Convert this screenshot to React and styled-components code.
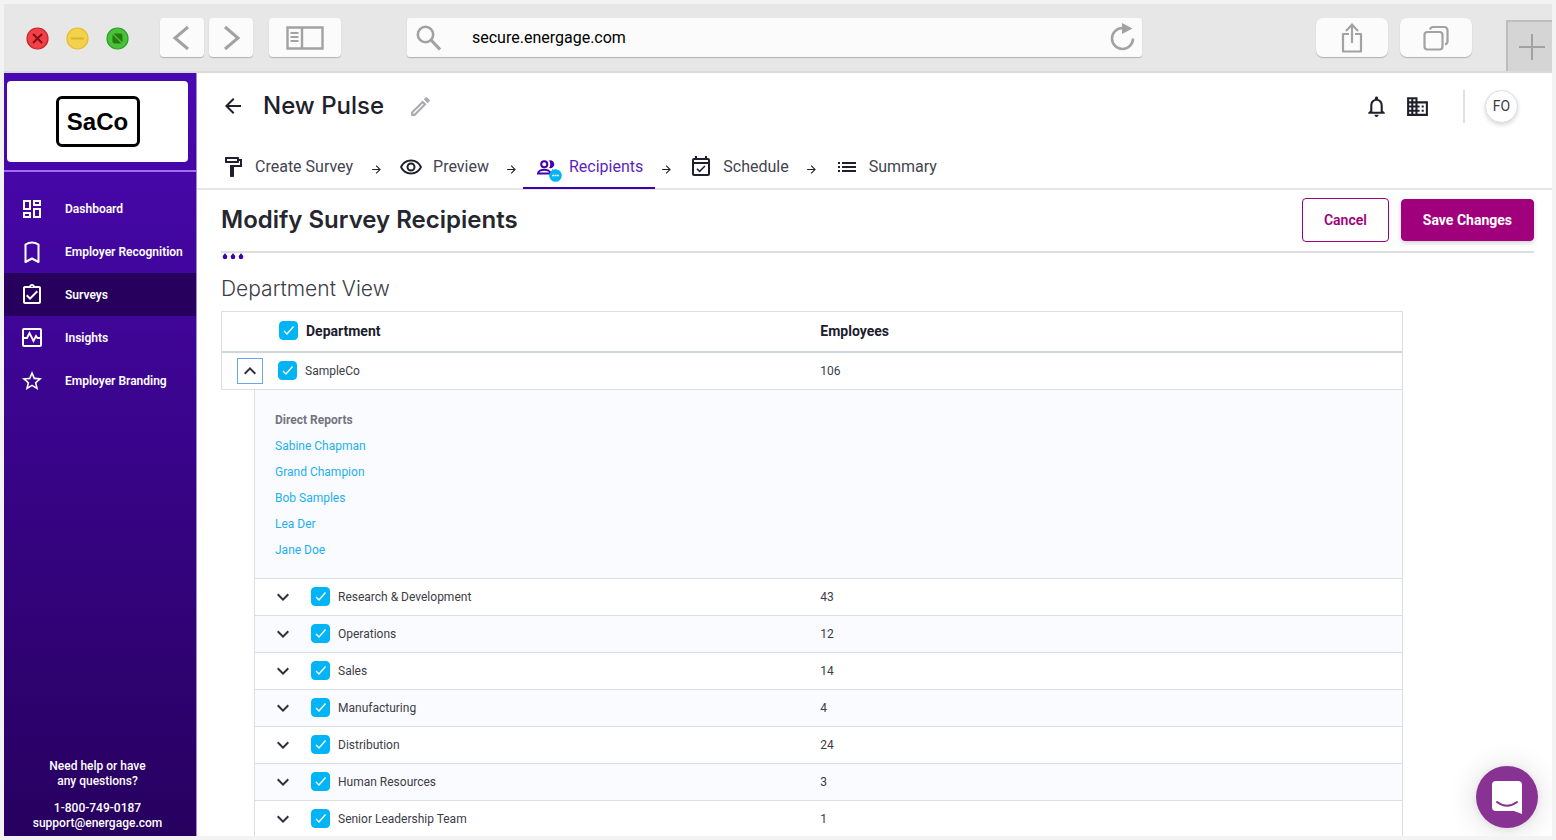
import { Fragment, useState } from "react";
import styled, { createGlobalStyle } from "styled-components";
import {
  MdArrowBack,
  MdArrowForward,
  MdBusiness,
  MdExpandLess,
  MdExpandMore,
  MdList,
  MdNotificationsNone,
  MdOutlineAssignmentTurnedIn,
  MdOutlineDashboard,
  MdOutlineEdit,
  MdOutlineEventAvailable,
  MdOutlineFormatPaint,
  MdOutlineRemoveRedEye,
  MdStarBorder,
} from "react-icons/md";

const GlobalStyle = createGlobalStyle`
  * {
    box-sizing: border-box;
  }

  body {
    margin: 0;
    background: #f3f3f3;
    color: #3c3c46;
    font-family: Roboto, "Liberation Sans", sans-serif;
    font-size: 12px;
  }

  button, input {
    font-family: inherit;
  }

  svg {
    display: block;
    flex: none;
  }
`;

const Window = styled.div`
  position: relative;
  display: flex;
  flex-direction: column;
  height: calc(100vh - 8px);
  margin: 4px;
  overflow: hidden;
  background: #fff;
`;

/* browser bar */

const BrowserBar = styled.div`
  display: flex;
  flex: none;
  align-items: flex-start;
  height: 69px;
  padding: 14px 0 0 22px;
  background: #e7e7e7;
  border-bottom: 2px solid #dadada;
`;

const TrafficLights = styled.div`
  display: flex;
  gap: 17px;
  height: 40px;
  align-items: center;
  margin-right: 31px;
`;

const BrowserButton = styled.button`
  display: flex;
  align-items: center;
  justify-content: center;
  width: ${({ $wide }) => ($wide ? "72px" : "44px")};
  height: 39px;
  padding: 0;
  border: 0;
  border-radius: ${({ $round }) => ($round ? "7px" : "4px")};
  background: #fbfbfb;
  box-shadow: 0 1px 1px #b0b0b0;
`;

const ButtonGroup = styled.div`
  display: flex;
  gap: ${({ $gap }) => $gap}px;
  margin-right: ${({ $after }) => $after}px;
`;

const AddressBar = styled.label`
  display: flex;
  flex: 1;
  align-items: center;
  height: 39px;
  margin: 0 174px 0 66px;
  padding: 0 7px 0 9px;
  border-radius: 3px;
  background: #fbfbfb;
  box-shadow: 0 1px 1px #b0b0b0;
`;

const AddressInput = styled.input`
  flex: 1;
  min-width: 0;
  margin-left: 30px;
  padding: 0;
  border: 0;
  outline: 0;
  background: none;
  color: #000;
  font-size: 16px;
`;

const NewTabButton = styled.button`
  display: flex;
  align-items: center;
  justify-content: center;
  width: 46px;
  height: 51px;
  margin-top: 2px;
  padding: 0 0 0 4px;
  border: solid #bdbdbd;
  border-width: 2px 0 0 2px;
  background: #d5d5d5;
`;

/* sidebar */

const Body = styled.div`
  display: flex;
  flex: 1;
  min-height: 0;
`;

const Sidebar = styled.aside`
  display: flex;
  flex: none;
  flex-direction: column;
  width: 193px;
  border-right: 1px solid #a48bd6;
  background: linear-gradient(#4a08b2, #27005f);
  color: #fff;
`;

const LogoArea = styled.div`
  padding: 8px 8px 8px 3px;
  border-bottom: 2px solid #a46cf2;
`;

const LogoCard = styled.div`
  display: flex;
  align-items: center;
  justify-content: center;
  height: 81px;
  border-radius: 4px;
  background: #fff;
`;

const Logo = styled.div`
  width: 84px;
  border: 3px solid #000;
  border-radius: 6px;
  color: #000;
  font: bold 24px/45px "Liberation Sans", sans-serif;
  text-align: center;
`;

const SideNav = styled.nav`
  flex: 1;
  padding-top: 15px;
`;

const SideLink = styled.a`
  display: flex;
  align-items: center;
  gap: 21px;
  height: 43px;
  padding-left: 16px;
  background: ${({ $active }) => ($active ? "#26005c" : "none")};
  color: #fff;
  font-size: 12px;
  font-weight: 600;
  text-decoration: none;
  white-space: nowrap;
`;

const Help = styled.div`
  padding-bottom: 5px;
  font-size: 12px;
  font-weight: 500;
  line-height: 15px;
  text-align: center;

  p {
    margin: 12px 5px 0 0;
  }
`;

/* page header */

const Main = styled.main`
  flex: 1;
  min-width: 0;
  overflow-y: auto;
  scrollbar-width: none;
`;

const Header = styled.header`
  display: flex;
  align-items: center;
  height: 66px;
  padding: 0 34px 0 24px;
  color: #20202c;
`;

const IconButton = styled.button`
  display: flex;
  padding: 0;
  border: 0;
  background: none;
  color: ${({ $muted }) => ($muted ? "#a9a9b3" : "inherit")};
`;

const PageName = styled.h1`
  margin: 0 24px 0 18px;
  font: 500 24px/32px Inter, sans-serif;
`;

const HeaderTools = styled.div`
  display: flex;
  align-items: center;
  gap: 16px;
  margin-left: auto;
`;

const Divider = styled.span`
  width: 2px;
  height: 33px;
  margin: 0 4px 0 17px;
  background: #dfe0e4;
`;

const Avatar = styled.button`
  width: 33px;
  height: 33px;
  padding: 0;
  border: 1px solid #dcdce6;
  border-radius: 50%;
  background: #fff;
  box-shadow: 0 2px 4px #d8d8d8;
  color: #3c3c46;
  font-size: 14px;
`;

const Steps = styled.nav`
  display: flex;
  height: 51px;
  padding-left: 12px;
  border-bottom: 2px solid #e6e6e6;
`;

const Step = styled.a`
  display: flex;
  align-items: center;
  gap: 10px;
  height: 50px;
  padding: 6px 12px 0;
  border-bottom: 2px solid ${({ $active }) => ($active ? "#4200ad" : "transparent")};
  color: ${({ $active }) => ($active ? "#5b1fc0" : "#44444f")};
  font-size: 16px;
  text-decoration: none;
  white-space: nowrap;

  svg {
    color: ${({ $active }) => ($active ? "#4200ad" : "#20202c")};
  }
`;

const StepArrow = styled.span`
  display: flex;
  align-items: center;
  justify-content: center;
  width: 22px;
  padding-top: 11px;
  color: #20202c;
`;

const StepIcon = styled.span`
  position: relative;
  padding-top: 1px;
`;

const StepBadge = styled.span`
  position: absolute;
  right: -3px;
  bottom: -4px;
`;

/* content */

const Content = styled.section`
  padding: 0 18px 0 24px;
`;

const TitleRow = styled.div`
  display: flex;
  align-items: center;
  gap: 12px;
  height: 63px;
  padding-bottom: 2px;
  border-bottom: 2px solid #dedede;
`;

const Title = styled.h2`
  flex: 1;
  margin: 0;
  color: #26262f;
  font: 600 24px/32px Inter, sans-serif;
`;

const ActionButton = styled.button`
  height: ${({ $primary }) => ($primary ? "42px" : "44px")};
  padding: 0 21px;
  border: 1px solid #a0007c;
  border-radius: 4px;
  background: ${({ $primary }) => ($primary ? "#a0007c" : "#fff")};
  box-shadow: ${({ $primary }) => ($primary ? "0 2px 4px #d0d0d0" : "none")};
  color: ${({ $primary }) => ($primary ? "#fff" : "#a0007c")};
  font-size: 14px;
  font-weight: ${({ $primary }) => ($primary ? 700 : 600)};
  white-space: nowrap;
`;

const ViewTitle = styled.h3`
  margin: 14px 0 8px;
  color: #3c3c46;
  font: 300 21px/28px Inter, sans-serif;
`;

const Table = styled.table`
  width: 90%;
  border-collapse: separate;
  border-spacing: 0;
  border-right: 1px solid #dcdee6;
  table-layout: fixed;
`;

const IndentCol = styled.col`
  width: 33px;
`;

const CountCol = styled.col`
  width: 50%;
`;

const HeadCell = styled.th`
  height: 42px;
  padding: 0 0 2px ${({ $count }) => ($count ? "9px" : "57px")};
  border: solid #dcdee6;
  border-width: 1px 0 2px ${({ $count }) => ($count ? "0" : "1px")};
  border-bottom-color: #d0d4dc;
  color: #20202c;
  font-size: 14px;
  font-weight: 700;
  text-align: left;
`;

const Cell = styled.td`
  height: 37px;
  padding: 0 0 1px ${({ $count }) => ($count ? "9px" : "15px")};
  border: solid #dcdee6;
  border-width: 0 0 1px ${({ $count }) => ($count ? "0" : "1px")};
  background: ${({ $shaded }) => ($shaded ? "#fafbff" : "#fff")};
`;

const Spacer = styled.td`
  padding: 0;
`;

const CellInner = styled.div`
  display: flex;
  align-items: center;
  gap: 15px;
`;

const Toggle = styled.button`
  display: flex;
  align-items: center;
  justify-content: center;
  width: 26px;
  height: 26px;
  padding: 0;
  border: 1px solid ${({ $focused }) => ($focused ? "#6ea2f5" : "transparent")};
  background: none;
  color: #30303c;
`;

const CheckLabel = styled.label`
  display: flex;
  align-items: center;
  gap: 8px;
`;

const CheckStack = styled.span`
  display: grid;

  > * {
    grid-area: 1 / 1;
  }

  svg {
    pointer-events: none;
  }
`;

const CheckInput = styled.input`
  width: 19px;
  height: 19px;
  margin: 0;
  appearance: none;
  border: 1px solid #00b4f5;
  border-radius: 4px;
  background: #fff;

  &:checked {
    background: #00b4f5;
  }
`;

const Reports = styled.td`
  padding: 17px 0 15px 20px;
  border: solid #dcdee6;
  border-width: 0 0 1px 1px;
  background: #fafbff;
`;

const ReportsTitle = styled.div`
  color: #74747e;
  font-weight: 700;
  line-height: 26px;
`;

const ReportLink = styled.a`
  display: block;
  width: fit-content;
  color: #1eb0ee;
  line-height: 26px;
  text-decoration: none;
`;

const ChatButton = styled.button`
  position: absolute;
  right: 14px;
  bottom: 8px;
  width: 62px;
  height: 62px;
  padding: 0;
  border: 0;
  border-radius: 50%;
  background: #883394;
  box-shadow: 0 1px 6px rgba(0, 0, 0, 0.08), 0 2px 30px rgba(0, 0, 0, 0.14);
`;

const BookmarkIcon = () => (
  <svg width="24" height="24" viewBox="0 0 24 24" fill="none" stroke="currentColor" strokeWidth="2">
    <path d="M5.500 22V4.500Q12 0.500 18.500 4.500V22L12 18.500z" strokeLinejoin="round" />
  </svg>
);

const PulseIcon = () => (
  <svg width="24" height="24" viewBox="0 0 24 24" fill="none" stroke="currentColor" strokeWidth="2">
    <rect x="3" y="3" width="18" height="17" rx="1" />
    <path d="M3 12h4l2.500-5 4 8 2.500-5 1.500 2H21" strokeWidth="1.800" />
  </svg>
);

const PeopleIcon = () => (
  <svg width="24" height="22" viewBox="0 0 26 24" fill="none" stroke="currentColor" strokeWidth="2.200">
    <circle cx="10" cy="9" r="3.300" />
    <path d="M3.200 19.200c0-3 4-4.200 6.800-4.200s6.800 1.200 6.800 4.200z" />
    <path
      d="M15.300 4.800c3.200-.6 5.700 1.500 5.700 4.200s-2.500 4.800-5.700 4.200c1.700-2.600 1.700-5.800 0-8.400zM18.500 14.500c2.600.8 4.500 2.400 4.500 5.500h-3.500c.2-2.200.2-3.800-1-5.500z"
      fill="currentColor"
      stroke="none"
    />
  </svg>
);

const MoreBadge = () => (
  <svg width="13" height="13" viewBox="0 0 13 13">
    <circle cx="6.500" cy="6.500" r="6.300" fill="#00b4f5" />
    <path d="M3 5.700h2v1.600H3zM5.500 5.700h2v1.600h-2zM8 5.700h2v1.600H8z" fill="#fff" />
  </svg>
);

const Drops = () => (
  <svg width="24" height="8" viewBox="0 0 24 8" fill="#4200ad">
    {[4, 12, 20].map((x) => (
      <path key={x} d={`M${x} 0c.5 1.400 2.300 2.100 2.300 4a2.300 2.300 0 0 1-4.600 0c0-1.900 1.800-2.600 2.300-4z`} />
    ))}
  </svg>
);

const NAV = [
  { label: "Dashboard", icon: <MdOutlineDashboard size={24} /> },
  { label: "Employer Recognition", icon: <BookmarkIcon /> },
  { label: "Surveys", icon: <MdOutlineAssignmentTurnedIn size={24} />, active: true },
  { label: "Insights", icon: <PulseIcon /> },
  { label: "Employer Branding", icon: <MdStarBorder size={24} /> },
];

const STEPS = [
  { label: "Create Survey", icon: <MdOutlineFormatPaint size={24} /> },
  { label: "Preview", icon: <MdOutlineRemoveRedEye size={24} /> },
  { label: "Recipients", icon: <PeopleIcon />, active: true },
  { label: "Schedule", icon: <MdOutlineEventAvailable size={24} /> },
  { label: "Summary", icon: <MdList size={24} /> },
];

const REPORTS = ["Sabine Chapman", "Grand Champion", "Bob Samples", "Lea Der", "Jane Doe"];

const DEPARTMENTS = [
  { name: "Research & Development", employees: 43 },
  { name: "Operations", employees: 12 },
  { name: "Sales", employees: 14 },
  { name: "Manufacturing", employees: 4 },
  { name: "Distribution", employees: 24 },
  { name: "Human Resources", employees: 3 },
  { name: "Senior Leadership Team", employees: 1 },
];

const Checkbox = ({ label }) => (
  <CheckLabel>
    <CheckStack>
      <CheckInput type="checkbox" defaultChecked />
      <svg width="19" height="19" viewBox="0 0 19 19" fill="none" stroke="#fff" strokeWidth="1.400">
        <path d="M5 10l3 3 6.500-7.500" />
      </svg>
    </CheckStack>
    {label}
  </CheckLabel>
);

const Browser = () => (
  <BrowserBar>
    <TrafficLights>
      <svg width="23" height="23" viewBox="0 0 23 23">
        <circle cx="11.500" cy="11.500" r="10.500" fill="#ee4248" stroke="#cf2027" strokeWidth="1.200" />
        <path d="M7 7l9 9M16 7l-9 9" stroke="#8c0a10" strokeWidth="2" />
      </svg>
      <svg width="23" height="23" viewBox="0 0 23 23">
        <circle cx="11.500" cy="11.500" r="10.500" fill="#f2d24c" stroke="#e5bd25" strokeWidth="1.200" />
        <path d="M5 11.500h13" stroke="#dfb21f" strokeWidth="2" />
      </svg>
      <svg width="23" height="23" viewBox="0 0 23 23">
        <circle cx="11.500" cy="11.500" r="10.500" fill="#4cc03c" stroke="#22a51b" strokeWidth="1.200" />
        <rect x="6.500" y="6.500" width="10" height="10" rx="2" fill="#257d0b" />
        <path d="M6 6l11 11" stroke="#4cc03c" strokeWidth="1.400" />
      </svg>
    </TrafficLights>
    <ButtonGroup $gap={5} $after={16}>
      <BrowserButton aria-label="Back">
        <svg width="20" height="26" viewBox="0 0 20 26" fill="none" stroke="#a2a2a2" strokeWidth="3">
          <path d="M16 2L3 13l13 11" />
        </svg>
      </BrowserButton>
      <BrowserButton aria-label="Forward">
        <svg width="20" height="26" viewBox="0 0 20 26" fill="none" stroke="#a2a2a2" strokeWidth="3">
          <path d="M4 2l13 11L4 24" />
        </svg>
      </BrowserButton>
    </ButtonGroup>
    <BrowserButton $wide aria-label="Show sidebar">
      <svg width="38" height="24" viewBox="0 0 38 24" fill="none" stroke="#a2a2a2" strokeWidth="2.400">
        <path d="M1.500 1.500h35v21h-35zM16 1v22" />
        <path d="M4.500 7h8M4.500 11h8M4.500 15h8" strokeWidth="1.800" />
      </svg>
    </BrowserButton>
    <Address />
    <ButtonGroup $gap={12} $after={34}>
      <BrowserButton $wide $round aria-label="Share">
        <svg width="22" height="32" viewBox="0 0 22 32" fill="none" stroke="#a2a2a2" strokeWidth="2.200">
          <path d="M8 12H2v17.500h18V12h-6" strokeLinejoin="round" />
          <path d="M11 21V2.500M5 9l6-6.500L17 9" />
        </svg>
      </BrowserButton>
      <BrowserButton $wide $round aria-label="Show tabs">
        <svg width="26" height="26" viewBox="0 0 26 26" fill="none" stroke="#a2a2a2" strokeWidth="2.200">
          <rect x="1.500" y="7" width="18" height="17.500" rx="3" />
          <path d="M7 4.500C7.500 3 8.500 2 10 2h11c2 0 3.500 1.500 3.500 3.500v11c0 1.500-.8 2.500-2.500 3" />
        </svg>
      </BrowserButton>
    </ButtonGroup>
    <NewTabButton aria-label="New tab">
      <svg width="26" height="26" viewBox="0 0 26 26" stroke="#a2a2a2" strokeWidth="2">
        <path d="M13 0v26M0 13h26" />
      </svg>
    </NewTabButton>
  </BrowserBar>
);

const Address = () => {
  const [url, setUrl] = useState("secure.energage.com");
  return (
    <AddressBar>
      <svg width="26" height="26" viewBox="0 0 26 26" fill="none" stroke="#a2a2a2">
        <circle cx="9.500" cy="9.500" r="7.700" strokeWidth="2.600" />
        <path d="M15 15L24 24.500" strokeWidth="3.200" />
      </svg>
      <AddressInput
        aria-label="Address"
        value={url}
        onChange={(e) => setUrl(e.target.value)}
      />
      <svg width="26" height="30" viewBox="0 0 26 30" fill="none" stroke="#a2a2a2" strokeWidth="2.600">
        <path d="M24 15.500a10.500 10.500 0 1 1-10.500-10.500" />
        <path d="M13 0v11L23.500 5.500z" fill="#a2a2a2" stroke="none" />
      </svg>
    </AddressBar>
  );
};

const DepartmentTable = () => (
  <Table>
    <colgroup>
      <IndentCol />
      <col />
      <CountCol />
    </colgroup>
    <thead>
      <tr>
        <HeadCell colSpan={2}>
          <Checkbox label="Department" />
        </HeadCell>
        <HeadCell $count>Employees</HeadCell>
      </tr>
    </thead>
    <tbody>
      <tr>
        <Cell colSpan={2}>
          <CellInner>
            <Toggle $focused aria-label="Collapse SampleCo">
              <MdExpandLess size={24} />
            </Toggle>
            <Checkbox label="SampleCo" />
          </CellInner>
        </Cell>
        <Cell $count>106</Cell>
      </tr>
      <tr>
        <Spacer />
        <Reports colSpan={2}>
          <ReportsTitle>Direct Reports</ReportsTitle>
          {REPORTS.map((name) => (
            <ReportLink key={name} href="#">
              {name}
            </ReportLink>
          ))}
        </Reports>
      </tr>
      {DEPARTMENTS.map(({ name, employees }, i) => (
        <tr key={name}>
          <Spacer />
          <Cell $shaded={i % 2 === 1}>
            <CellInner>
              <Toggle aria-label={`Expand ${name}`}>
                <MdExpandMore size={24} />
              </Toggle>
              <Checkbox label={name} />
            </CellInner>
          </Cell>
          <Cell $count $shaded={i % 2 === 1}>
            {employees}
          </Cell>
        </tr>
      ))}
    </tbody>
  </Table>
);

const App = () => (
  <>
    <GlobalStyle />
    <Window>
      <Browser />
      <Body>
        <Sidebar>
          <LogoArea>
            <LogoCard>
              <Logo>SaCo</Logo>
            </LogoCard>
          </LogoArea>
          <SideNav>
            {NAV.map(({ label, icon, active }) => (
              <SideLink key={label} href="#" $active={active}>
                {icon}
                {label}
              </SideLink>
            ))}
          </SideNav>
          <Help>
            <p>
              Need help or have
              <br />
              any questions?
            </p>
            <p>
              1-800-749-0187
              <br />
              support@energage.com
            </p>
          </Help>
        </Sidebar>
        <Main>
          <Header>
            <IconButton aria-label="Back">
              <MdArrowBack size={24} />
            </IconButton>
            <PageName>New Pulse</PageName>
            <IconButton $muted aria-label="Rename">
              <MdOutlineEdit size={25} />
            </IconButton>
            <HeaderTools>
              <IconButton aria-label="Notifications">
                <MdNotificationsNone size={25} />
              </IconButton>
              <IconButton aria-label="Company">
                <MdBusiness size={25} />
              </IconButton>
              <Divider />
              <Avatar>FO</Avatar>
            </HeaderTools>
          </Header>
          <Steps>
            {STEPS.map(({ label, icon, active }, i) => (
              <Fragment key={label}>
                {i > 0 && (
                  <StepArrow>
                    <MdArrowForward size={13} />
                  </StepArrow>
                )}
                <Step href="#" $active={active}>
                  <StepIcon>
                    {icon}
                    {active && (
                      <StepBadge>
                        <MoreBadge />
                      </StepBadge>
                    )}
                  </StepIcon>
                  {label}
                </Step>
              </Fragment>
            ))}
          </Steps>
          <Content>
            <TitleRow>
              <Title>Modify Survey Recipients</Title>
              <ActionButton>Cancel</ActionButton>
              <ActionButton $primary>Save Changes</ActionButton>
            </TitleRow>
            <Drops />
            <ViewTitle>Department View</ViewTitle>
            <DepartmentTable />
          </Content>
        </Main>
      </Body>
      <ChatButton aria-label="Open chat">
        <svg width="62" height="62" viewBox="0 0 62 62">
          <path
            d="M20 15h22q4 0 4 4v29l-8-3H20q-4 0-4-4V19q0-4 4-4z"
            fill="#fff"
          />
          <path d="M21 36q10 7.500 20 0" fill="none" stroke="#883394" strokeWidth="2" strokeLinecap="round" />
        </svg>
      </ChatButton>
    </Window>
  </>
);

export default App;
